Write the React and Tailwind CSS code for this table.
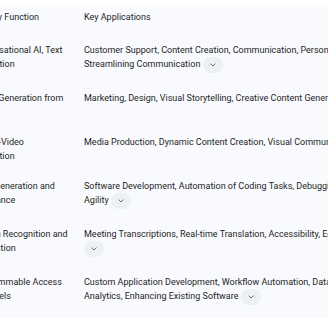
import React from "react";

const rows = [
  {
    fn: "Conversational AI, Text Generation",
    apps: "Customer Support, Content Creation, Communication, Personalization, Streamlining Communication",
    chip: true,
  },
  {
    fn: "Image Generation from Text",
    apps: "Marketing, Design, Visual Storytelling, Creative Content Generation",
  },
  {
    fn: "Text-to-Video Generation",
    apps: "Media Production, Dynamic Content Creation, Visual Communication",
  },
  {
    fn: "Code Generation and Assistance",
    apps: "Software Development, Automation of Coding Tasks, Debugging, Agility",
    chip: true,
  },
  {
    fn: "Speech Recognition and Translation",
    apps: "Meeting Transcriptions, Real-time Translation, Accessibility, Education",
    chip: true,
  },
  {
    fn: "Programmable Access to Models",
    apps: "Custom Application Development, Workflow Automation, Data Analytics, Enhancing Existing Software",
    chip: true,
  },
];

function SourceChip() {
  return (
    <span className="inline-flex h-[16px] w-[20px] items-center justify-center rounded-full bg-[#edf0f4] align-middle">
      <svg width="6" height="4" viewBox="0 0 6 4" fill="none">
        <path d="M0.8 0.8 L3 3 L5.2 0.8" stroke="#5f6368" strokeWidth="0.9" strokeLinecap="round" strokeLinejoin="round" />
      </svg>
    </span>
  );
}

export default function App() {
  return (
    <div className="h-[320px] w-[328px] overflow-hidden bg-white font-['Roboto',sans-serif] text-[9px] leading-[14px] text-[#1f1f1f]">
      {/* table is scrolled a little to the right, so the first column is cut */}
      <div className="mt-[5px] -ml-[29px] w-max bg-[#f8fafd] pb-[3px]">
        <div className="grid grid-cols-[98px_282px] gap-x-[15px] pt-[5px] pb-[11px]">
          <div>Primary Function</div>
          <div>Key Applications</div>
        </div>
        {rows.map((row) => (
          <div
            key={row.fn}
            className={row.chip ? "grid grid-cols-[98px_282px] gap-x-[15px] pt-2 pb-[10px]" : "grid grid-cols-[98px_282px] gap-x-[15px] py-2"}
          >
            <div>{row.fn}</div>
            <div>
              {row.apps}
              {row.chip && (
                <>
                  {" "}
                  <SourceChip />
                </>
              )}
            </div>
          </div>
        ))}
      </div>
    </div>
  );
}
